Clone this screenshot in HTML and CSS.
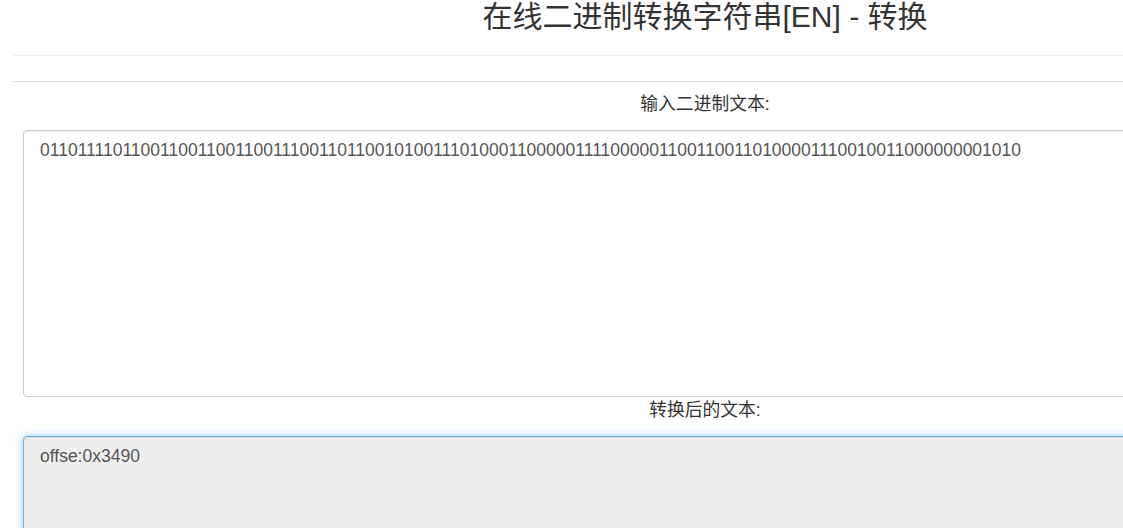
FILE: index.html
```html
<!DOCTYPE html>
<html lang="zh-CN">
<head>
    <meta charset="UTF-8">
    <meta name="viewport" content="width=device-width, initial-scale=1.0">
    <title>在线二进制转换字符串[EN] - 转换</title>
    <link rel="stylesheet" href="styles.css">
</head>
<body>
    <div class="page">
        <h1 class="title">在线二进制转换字符串[EN] - 转换</h1>
        <hr class="rule">
        <div class="tabs"></div>
        <div class="field">
            <label for="binInput">输入二进制文本:</label>
            <div class="box">
                <textarea id="binInput" class="input">01101111011001100110011001110011011001010011101000110000011110000011001100110100001110010011000000001010</textarea>
            </div>
        </div>
        <div class="field">
            <label for="textOutput">转换后的文本:</label>
            <div class="box">
                <textarea id="textOutput" class="input output" readonly>offse:0x3490</textarea>
            </div>
        </div>
    </div>
</body>
</html>
```

FILE: styles.css
```css
html, body {
    overflow: hidden;
}
body {
    margin: 0;
    font-family: "Liberation Sans", Arial, "Noto Sans CJK SC", sans-serif;
    font-size: 16.8px;
    line-height: 1.42857;
    color: #333;
    background-color: #fff;
}
.page {
    width: 1384px;
    margin-left: 13px;
}
.title {
    margin: 0;
    font-size: 30px;
    font-weight: normal;
    line-height: 33px;
    text-align: center;
    color: #333;
}
.rule {
    margin: 22px 0 0 0;
    border: 0;
    border-top: 1px solid #eee;
}
.tabs {
    height: 25px;
    border-bottom: 1px solid #ddd;
}
.field {
    text-align: center;
}
.field label {
    display: block;
    padding-top: 10px;
    font-size: 17.8px;
    line-height: 24px;
    color: #333;
}
.box {
    padding: 0 10px;
}
.input {
    display: block;
    box-sizing: border-box;
    width: 100%;
    height: 267px;
    margin-top: 14px;
    padding: 7px 16px;
    border: 1px solid #ccc;
    border-radius: 4px;
    box-shadow: inset 0 1px 1px rgba(0, 0, 0, 0.075);
    font-family: "Liberation Sans", Arial, sans-serif;
    font-size: 17.5px;
    line-height: 24px;
    color: #555;
    background-color: #fff;
    resize: none;
    text-align: left;
}
.field + .field label {
    padding-top: 1px;
}
.output {
    background-color: #eee;
    border-color: #66afe9;
    box-shadow: inset 0 1px 1px rgba(0, 0, 0, 0.075), 0 0 8px rgba(102, 175, 233, 0.6);
}
```
